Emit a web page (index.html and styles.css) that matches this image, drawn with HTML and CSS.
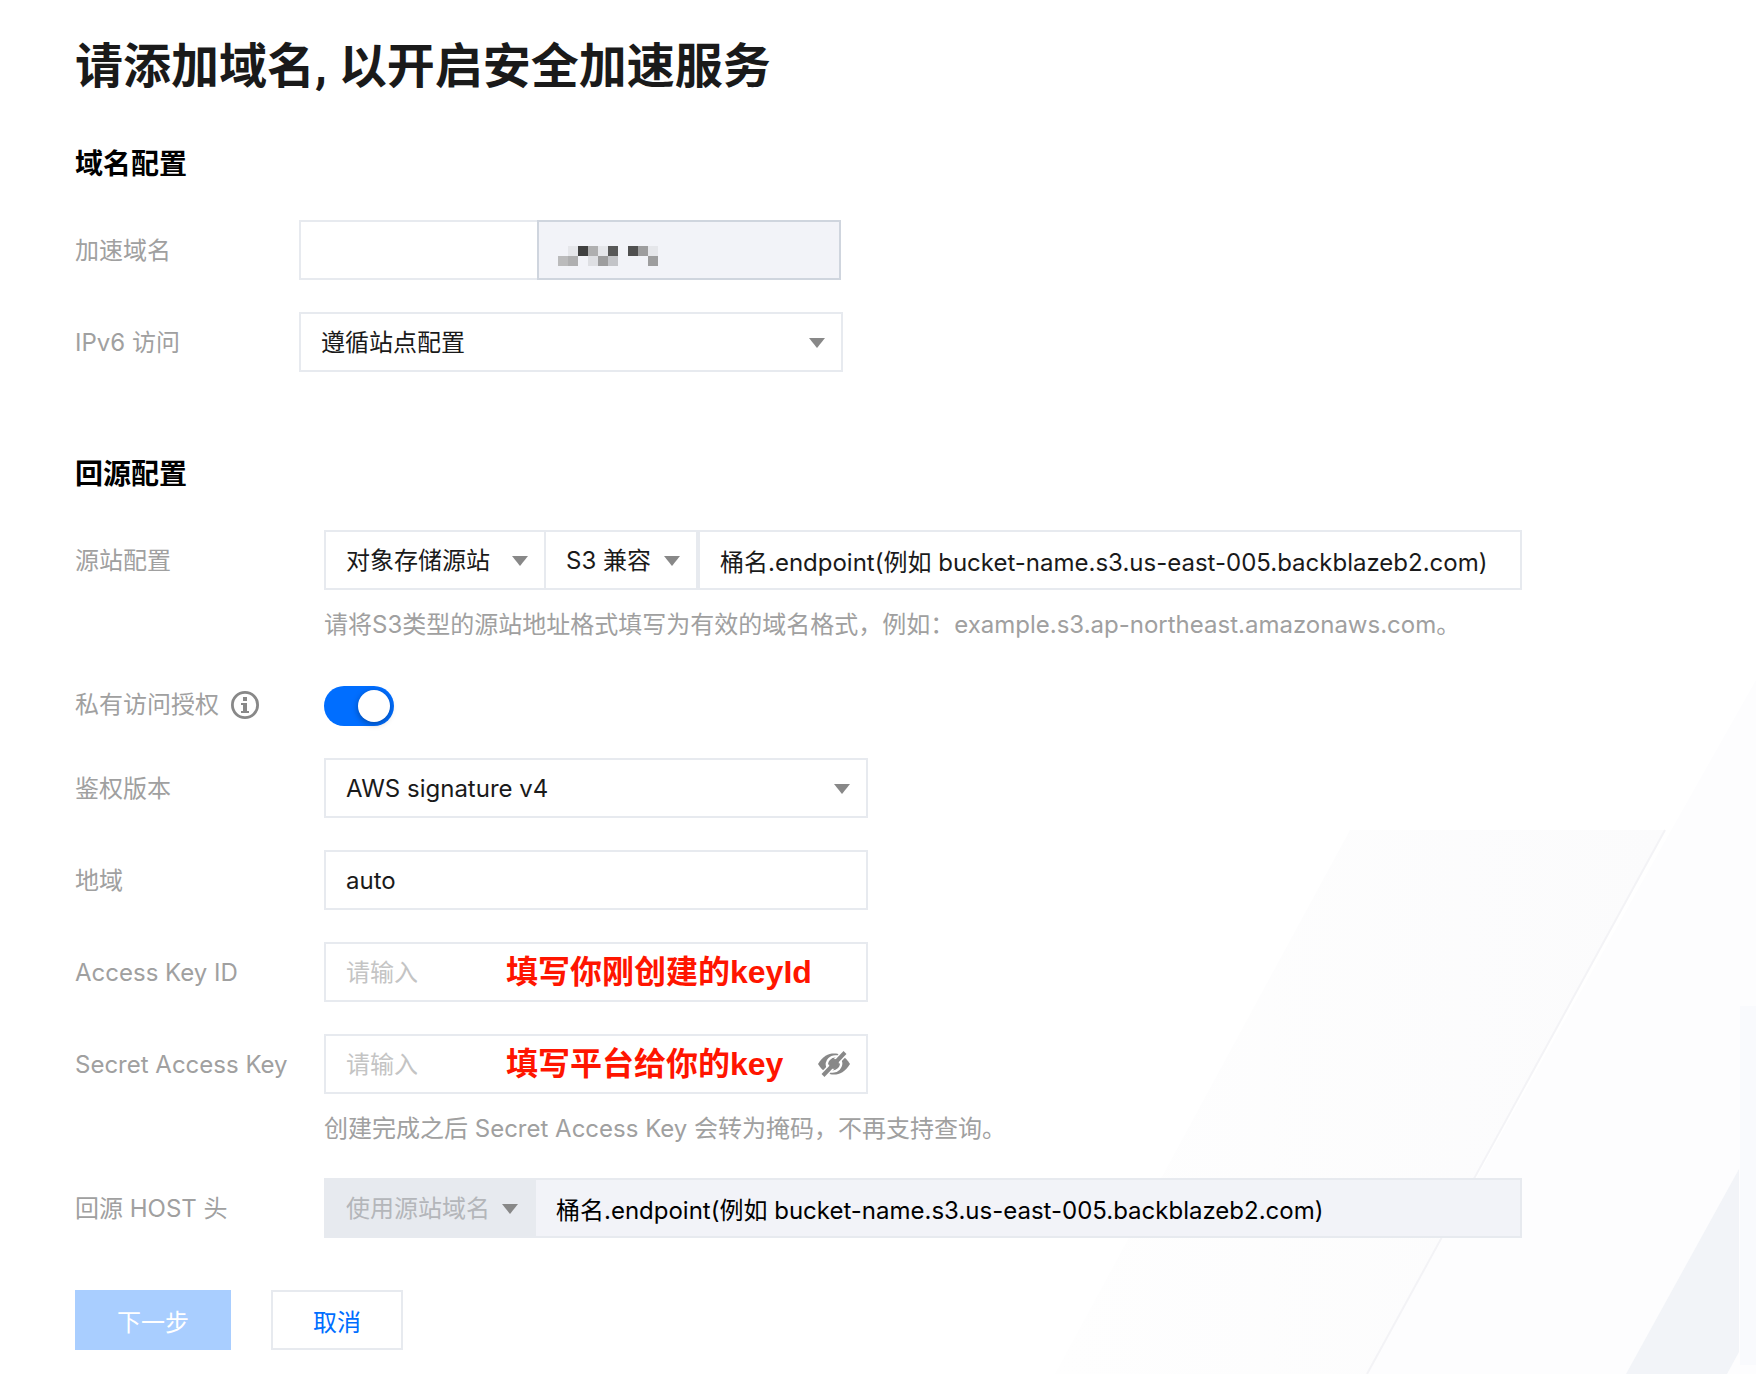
FILE: index.html
```html
<!DOCTYPE html>
<html lang="zh-CN">
<head>
    <meta charset="UTF-8">
    <meta name="viewport" content="width=device-width, initial-scale=1.0">
    <title>添加域名</title>
    <link rel="stylesheet" href="styles.css">
</head>

<body>
    <svg class="backdrop" viewBox="0 0 706 704" aria-hidden="true">
        <defs>
            <linearGradient id="fade" x1="0" y1="0" x2="1" y2="0">
                <stop offset="0" stop-color="#fefefe"/>
                <stop offset="1" stop-color="#fbfbfc"/>
            </linearGradient>
        </defs>
        <polygon points="706,10 610,180 317,704 706,704" fill="#fdfdfe"/>
        <polygon points="300,160 615,160 317,704 5,704" fill="url(#fade)"/>
        <line x1="615" y1="160" x2="317" y2="704" stroke="#f3f3f6" stroke-width="2"/>
        <polygon points="689,499 689,682 677,704 576,704" fill="#f2f4f8"/>
        <rect x="690" y="336" width="16" height="359" fill="#f9fafd"/>
    </svg>

    <form class="page">
        <h1>请添加域名, 以开启安全加速服务</h1>

        <section class="section">
            <h2>域名配置</h2>
            <div class="row">
                <label class="label" for="domain">加速域名</label>
                <div class="group domain-group">
                    <input class="input domain-input" id="domain" type="text">
                    <div class="domain-suffix">
                        <svg width="100" height="20" viewBox="0 0 10 2" shape-rendering="crispEdges" aria-hidden="true">
                            <path d="M1 0h1v1h-1zM4 0h1v1h-1zM9 0h1v1h-1z" fill="#e5e6ea"/>
                            <path d="M2 0h1v1h-1z" fill="#404040"/>
                            <path d="M3 0h1v1h-1zM1 1h1v1h-1z" fill="#afafb0"/>
                            <path d="M5 0h1v1h-1z" fill="#585858"/>
                            <path d="M7 0h1v1h-1z" fill="#505050"/>
                            <path d="M8 0h1v1h-1zM4 1h1v1h-1zM9 1h1v1h-1z" fill="#9d9d9e"/>
                            <path d="M0 1h1v1h-1z" fill="#bbbbbc"/>
                            <path d="M3 1h1v1h-1z" fill="#dedfe3"/>
                            <path d="M5 1h1v1h-1z" fill="#c3c4c8"/>
                        </svg>
                    </div>
                </div>
            </div>
            <div class="row">
                <label class="label" for="ipv6">IPv6 访问</label>
                <div class="select field">
                    <select id="ipv6"><option>遵循站点配置</option></select>
                </div>
            </div>
        </section>

        <section class="section origin">
            <h2>回源配置</h2>
            <div class="row">
                <label class="label" for="origin">源站配置</label>
                <div class="content">
                    <div class="group">
                        <div class="select type-select">
                            <select aria-label="源站类型"><option>对象存储源站</option></select>
                        </div>
                        <div class="select s3-select">
                            <select aria-label="存储类型"><option>S3 兼容</option></select>
                        </div>
                        <input class="input" id="origin" type="text" value="桶名.endpoint(例如 bucket-name.s3.us-east-005.backblazeb2.com)">
                    </div>
                    <p class="hint">请将S3类型的源站地址格式填写为有效的域名格式，例如：example.s3.ap-northeast.amazonaws.com。</p>
                </div>
            </div>
            <div class="row switch-row">
                <label class="label" for="private">私有访问授权
                    <svg class="info" width="28" height="28" viewBox="0 0 28 28" aria-hidden="true">
                        <circle cx="14" cy="14" r="12.6" fill="none" stroke="#888" stroke-width="2.8"/>
                        <path d="M12 6h4v4h-4zM10 12h6v8h2v2h-8v-2h2v-6h-2z" fill="#888"/>
                    </svg>
                </label>
                <input class="switch" id="private" type="checkbox" role="switch" checked>
            </div>
            <div class="row">
                <label class="label" for="version">鉴权版本</label>
                <div class="select field">
                    <select id="version"><option>AWS signature v4</option></select>
                </div>
            </div>
            <div class="row">
                <label class="label" for="region">地域</label>
                <div class="field">
                    <input class="input" id="region" type="text" value="auto">
                </div>
            </div>
            <div class="row">
                <label class="label" for="key-id">Access Key ID</label>
                <div class="field">
                    <input class="input" id="key-id" type="text" placeholder="请输入">
                    <span class="note">填写你刚创建的keyId</span>
                </div>
            </div>
            <div class="row">
                <label class="label" for="secret">Secret Access Key</label>
                <div class="content">
                    <div class="field">
                        <input class="input" id="secret" type="password" placeholder="请输入">
                        <span class="note">填写平台给你的key</span>
                        <button class="eye" type="button" aria-label="显示">
                            <svg width="32" height="28" viewBox="0 0 32 28">
                                <path d="M0 14C5 6 10 3.500 16 3.500S27 6 32 14C27 22 22 24.500 16 24.500S5 22 0 14z" fill="#888"/>
                                <path d="M9.500 17.500C7 11 13 5.500 19 6.500M22.500 10.500C25 17 19 22.500 13 21.500" fill="none" stroke="#fff" stroke-width="2.400"/>
                                <path d="M5 25.500L27 2.500" stroke="#fff" stroke-width="7"/>
                                <circle cx="16" cy="14" r="5" fill="#888"/>
                                <path d="M5 25.500L27 2.500" stroke="#888" stroke-width="4"/>
                            </svg>
                        </button>
                    </div>
                    <p class="hint">创建完成之后 Secret Access Key 会转为掩码，不再支持查询。</p>
                </div>
            </div>
            <div class="row">
                <label class="label" for="host">回源 HOST 头</label>
                <div class="content">
                    <div class="group">
                        <div class="select host-select">
                            <select aria-label="HOST 头类型" disabled><option>使用源站域名</option></select>
                        </div>
                        <input class="input host-input" id="host" type="text" readonly value="桶名.endpoint(例如 bucket-name.s3.us-east-005.backblazeb2.com)">
                    </div>
                </div>
            </div>
        </section>

        <div class="actions">
            <button class="btn btn-primary" type="submit" disabled>下一步</button>
            <button class="btn" type="button">取消</button>
        </div>
    </form>
</body>
</html>
```
FILE: styles.css
```css
* {
    box-sizing: border-box;
}
body {
    position: relative;
    min-height: 100vh;
    margin: 0;
    background: #fff;
    color: #1a1a1a;
    font-family: Inter, "Noto Sans CJK SC", sans-serif;
    font-size: 24px;
}
input, select, button {
    font: inherit;
    color: inherit;
    border-radius: 0;
}
.backdrop {
    position: absolute;
    right: 0;
    bottom: 0;
    width: 706px;
    height: 704px;
    max-width: 100%;
}
.page {
    position: relative;
    padding: 39px 75px 24px;
}
h1 {
    margin: 0 0 49px;
    font-family: Roboto, "Noto Sans CJK SC", sans-serif;
    font-size: 48px;
    line-height: 56px;
}
h2 {
    margin: 0 0 36px;
    color: #000;
    font-size: 28px;
    line-height: 40px;
}
.section {
    margin-bottom: 80px;
}
.row {
    display: flex;
    align-items: flex-start;
    margin-bottom: 30px;
}
.label {
    flex: none;
    width: 224px;
    color: #a0a0a0;
    line-height: 62px;
}
.origin .label {
    width: 249px;
}
.content {
    flex: 1;
    max-width: 1198px;
}
.group {
    display: flex;
}
.field {
    position: relative;
    width: 544px;
}
.input {
    flex: 1;
    display: block;
    width: 100%;
    min-width: 0;
    height: 60px;
    padding: 0 20px;
    border: 2px solid #e7eaef;
    background: #fff;
    outline: none;
}
.input::placeholder {
    color: #c4c4c4;
    opacity: 1;
}
.hint {
    margin: 16px 0 0;
    color: #a0a0a0;
    line-height: 38px;
}

/* domain name with fixed suffix */
.domain-group {
    width: 542px;
}
.domain-input {
    border-right: 0;
}
.domain-suffix {
    width: 304px;
    height: 60px;
    padding: 24px 19px 0;
    border: 2px solid #cfd5de;
    background: #f2f3f8;
    line-height: 0;
}

/* drop-downs */
.select {
    position: relative;
    flex: none;
}
.select select {
    display: block;
    width: 100%;
    height: 60px;
    padding: 0 40px 0 20px;
    border: 2px solid #e7eaef;
    background: #fff;
    appearance: none;
    outline: none;
}
.select::after {
    content: "";
    position: absolute;
    top: 26px;
    right: 18px;
    border: 8px solid transparent;
    border-top: 10px solid #888;
    border-bottom: 0;
    pointer-events: none;
}
.type-select {
    width: 222px;
}
.s3-select {
    width: 152px;
}
.s3-select select {
    border-left: 0;
}
.host-select {
    width: 212px;
}
.host-select select {
    background: #e7eaef;
    color: #b4b6ba;
    opacity: 1;
}
.host-input {
    border-left: 0;
    background: #f2f3f8;
    color: #000;
}

/* switch */
.switch-row {
    padding: 12px 0 2px;
}
.switch-row .label {
    display: flex;
    align-items: center;
    gap: 12px;
    line-height: 38px;
}
.switch {
    position: relative;
    width: 70px;
    height: 40px;
    margin: 0;
    border-radius: 20px;
    background: #006eff;
    appearance: none;
}
.switch::after {
    content: "";
    position: absolute;
    top: 4px;
    right: 4px;
    width: 32px;
    height: 32px;
    border-radius: 50%;
    background: #fff;
    box-shadow: 0 2px 6px rgba(0, 0, 0, 0.35);
}

.note {
    position: absolute;
    top: 10px;
    left: 182px;
    color: #ff1500;
    font-family: "Liberation Sans", "Noto Sans CJK SC", sans-serif;
    font-size: 32px;
    font-weight: bold;
    line-height: 40px;
    white-space: nowrap;
    pointer-events: none;
}
.eye {
    position: absolute;
    top: 16px;
    right: 18px;
    height: 28px;
    padding: 0;
    border: 0;
    background: none;
    line-height: 0;
}

.actions {
    display: flex;
    gap: 40px;
    margin-top: 50px;
}
.origin {
    margin-bottom: 0;
}
.origin .row:last-child {
    margin-bottom: 0;
}
.btn {
    height: 60px;
    padding: 0 40px;
    border: 2px solid #e7eaef;
    background: #fff;
    color: #006eff;
}
.btn-primary {
    padding: 0 42px;
    border: 0;
    background: #a9ceff;
    color: #fff;
}
```
